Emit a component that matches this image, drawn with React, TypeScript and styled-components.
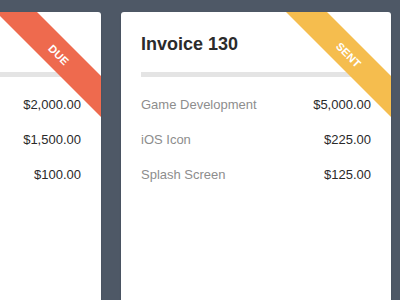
import React from 'react';
import styled, { createGlobalStyle } from 'styled-components';

const GlobalStyle = createGlobalStyle`
  html, body {
    margin: 0;
    padding: 0;
    background: #4e5866;
    overflow: hidden;
  }
  body {
    font-family: 'Liberation Sans', Arial, Helvetica, sans-serif;
  }
`;

const Board = styled.div`
  width: 400px;
  height: 300px;
  display: flex;
  gap: 20px;
  padding-top: 12px;
  box-sizing: border-box;
  overflow: hidden;
`;

const Card = styled.div<{ $offset?: number }>`
  position: relative;
  flex: 0 0 270px;
  height: 320px;
  margin-left: ${(p) => p.$offset || 0}px;
  background: #ffffff;
  border-radius: 3px;
  overflow: hidden;
  padding: 20px 20px 0;
  box-sizing: border-box;
  box-shadow: 0 1px 2px rgba(0, 0, 0, 0.15);
`;

const Title = styled.h2`
  margin: 0;
  font-size: 18px;
  line-height: 22px;
  font-weight: bold;
  color: #2b2b2b;
  padding-top: 1px;
`;

const Divider = styled.div`
  height: 5px;
  background: #e4e4e4;
  margin: 17px 0 10px;
`;

const Row = styled.div`
  height: 35px;
  display: flex;
  align-items: center;
  justify-content: space-between;
  font-size: 13px;

  .label {
    color: #8d8d8d;
  }
  .amount {
    color: #2a2a2a;
  }
`;

const Ribbon = styled.div<{ $color: string }>`
  position: absolute;
  top: 28px;
  right: -38px;
  width: 160px;
  height: 29px;
  transform: rotate(45deg);
  background: ${(p) => p.$color};
  color: #ffffff;
  font-size: 11px;
  font-weight: bold;
  letter-spacing: 0.2px;
  display: flex;
  align-items: center;
  justify-content: center;
`;

type Item = { label: string; amount: string };

type Invoice = {
  number: number;
  status: string;
  color: string;
  items: Item[];
};

const invoices: Invoice[] = [
  {
    number: 129,
    status: 'DUE',
    color: '#ee6a4e',
    items: [
      { label: 'Web Design', amount: '$2,000.00' },
      { label: 'Logo Design', amount: '$1,500.00' },
      { label: 'Favicon', amount: '$100.00' },
    ],
  },
  {
    number: 130,
    status: 'SENT',
    color: '#f5bd4e',
    items: [
      { label: 'Game Development', amount: '$5,000.00' },
      { label: 'iOS Icon', amount: '$225.00' },
      { label: 'Splash Screen', amount: '$125.00' },
    ],
  },
];

export default function App() {
  return (
    <>
      <GlobalStyle />
      <Board>
        {invoices.map((inv, i) => (
          <Card key={inv.number} $offset={i === 0 ? -169 : 0}>
            <Title>Invoice {inv.number}</Title>
            <Divider />
            {inv.items.map((item) => (
              <Row key={item.label}>
                <span className='label'>{item.label}</span>
                <span className='amount'>{item.amount}</span>
              </Row>
            ))}
            <Ribbon $color={inv.color}>{inv.status}</Ribbon>
          </Card>
        ))}
      </Board>
    </>
  );
}
